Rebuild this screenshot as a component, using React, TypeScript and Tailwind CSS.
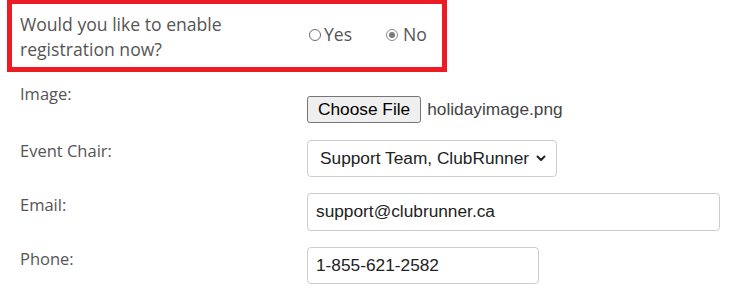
import React from "react";

function Radio({ checked }: { checked?: boolean }) {
  return (
    <span
      className={
        "flex h-[12px] w-[12px] items-center justify-center rounded-full border " +
        (checked ? "border-[#8a8a8a] bg-white" : "border-[#6b6b6b] bg-white")
      }
    >
      {checked ? <span className="h-[6px] w-[6px] rounded-full bg-[#7a7a7a]" /> : null}
    </span>
  );
}

export default function App() {
  const label = "w-[287px] shrink-0 text-[16.5px] leading-[24px] text-[#555555]";
  const ctl = "font-['Liberation_Sans',Arial,sans-serif] text-[17.3px] text-[#222222]";
  return (
    <div className="h-[291px] w-[735px] overflow-hidden bg-white font-['Open_Sans',sans-serif]">
      <div className="-mt-px ml-[7px] flex h-[73px] w-[440px] items-start border-[5px] border-[#ed1c24] pl-[8px] pt-[8px]">
        <div className="w-[287px] shrink-0 text-[17.6px] leading-[25px] text-[#555555]">
          Would you like to enable
          <br />
          registration now?
        </div>
        <div className="ml-[2px] mt-[10px] flex items-center text-[17.6px] leading-[25px] text-[#555555]">
          <Radio />
          <span className="ml-[3px]">Yes</span>
          <span className="ml-[34px]">
            <Radio checked />
          </span>
          <span className="ml-[5px]">No</span>
        </div>
      </div>

      <div className="ml-[20px] mt-[10px] flex items-start">
        <div className={label}>Image:</div>
        <div className={"mt-[14px] flex items-center " + ctl}>
          <span className="flex h-[27px] items-center rounded-[3px] border border-[#767676] bg-[#efefef] px-[10px] text-black">
            Choose File
          </span>
          <span className="ml-[6px] text-[#444444]">holidayimage.png</span>
        </div>
      </div>

      <div className="ml-[20px] mt-[16px] flex items-start">
        <div className={label}>Event Chair:</div>
        <div
          className={
            "mt-px flex h-[37px] w-[250px] items-center justify-between rounded-[4px] border border-[#cccccc] pl-[12px] pr-[10px] " +
            ctl
          }
        >
          <span>Support Team, ClubRunner</span>
          <svg width="10" height="7" viewBox="0 0 10 7" fill="none">
            <path d="M1.5 1.5L5 5l3.5-3.5" stroke="#222" strokeWidth="2" strokeLinecap="round" strokeLinejoin="round" />
          </svg>
        </div>
      </div>

      <div className="ml-[20px] mt-[16px] flex items-start">
        <div className={label}>Email:</div>
        <div
          className={
            "flex h-[38px] w-[413px] items-center rounded-[4px] border border-[#cccccc] pl-[8px] " + ctl
          }
        >
          support@clubrunner.ca
        </div>
      </div>

      <div className="ml-[20px] mt-[16px] flex items-start">
        <div className={label}>Phone:</div>
        <div
          className={
            "flex h-[37px] w-[232px] items-center rounded-[4px] border border-[#cccccc] pl-[8px] " + ctl
          }
        >
          1-855-621-2582
        </div>
      </div>
    </div>
  );
}
